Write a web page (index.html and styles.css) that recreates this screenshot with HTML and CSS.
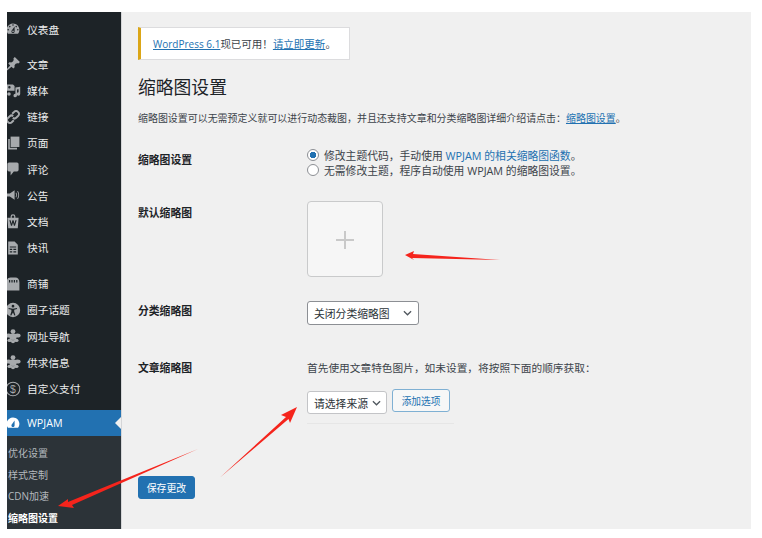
FILE: index.html
```html
<!DOCTYPE html>
<html lang="zh-CN">
<head>
<meta charset="utf-8">
<title>缩略图设置</title>
<link rel="stylesheet" href="styles.css">
</head>
<body>
<div class="admin">
  <nav class="sidebar">
    <ul class="menu">
      <li class="item"><svg class="ico" viewBox="0 0 20 20"><path d="M3.76 16h12.48c1.1-1.37 1.76-3.11 1.76-5 0-4.42-3.58-8-8-8s-8 3.58-8 8c0 1.89.66 3.63 1.76 5zM10 4c.55 0 1 .45 1 1s-.45 1-1 1-1-.45-1-1 .45-1 1-1zM6 6c.55 0 1 .45 1 1s-.45 1-1 1-1-.45-1-1 .45-1 1-1zm8 0c.55 0 1 .45 1 1s-.45 1-1 1-1-.45-1-1 .45-1 1-1zm-5.37 5.55L12 7v6c0 1.1-.9 2-2 2s-2-.9-2-2c0-.57.24-1.08.63-1.45zM4 10c.55 0 1 .45 1 1s-.45 1-1 1-1-.45-1-1 .45-1 1-1zm12 0c.55 0 1 .45 1 1s-.45 1-1 1-1-.45-1-1 .45-1 1-1zm-5 3c0-.55-.45-1-1-1s-1 .45-1 1 .45 1 1 1 1-.45 1-1z"/></svg>仪表盘</li>
    </ul>
    <ul class="menu menu-content">
      <li class="item"><svg class="ico" viewBox="0 0 20 20"><path d="M10.44 3.02l1.82-1.82 6.36 6.35-1.83 1.82c-1.05-.68-2.48-.57-3.41.36l-.75.75c-.92.93-1.04 2.35-.35 3.41l-1.83 1.82-2.41-2.41-2.8 2.79c-.42.42-3.38 2.71-3.8 2.29s1.86-3.39 2.28-3.81l2.79-2.79L4.1 9.36l1.83-1.82c1.05.69 2.48.57 3.4-.36l.75-.75c.93-.92 1.05-2.35.36-3.41z"/></svg>文章</li>
      <li class="item"><svg class="ico" viewBox="0 0 20 20"><path d="M2 3h8l2 2v6H7a3 3 0 0 0-2 0H2zm3.5 2a1.5 1.5 0 1 0 0 3 1.5 1.5 0 0 0 0-3zM13 7l6-1v9a2.2 2.2 0 1 1-2-2.2V9l-2 .4V17a2.2 2.2 0 1 1-2-2.2z"/><circle cx="5" cy="15" r="2.2"/></svg>媒体</li>
      <li class="item"><svg class="ico" viewBox="0 0 20 20"><path class="ico-line" d="M9 6l2.6-2.6a3 3 0 0 1 4.4 0l.6.6a3 3 0 0 1 0 4.4L14 11a3 3 0 0 1-4.2 0M11 14l-2.6 2.6a3 3 0 0 1-4.4 0l-.6-.6a3 3 0 0 1 0-4.4L6 9a3 3 0 0 1 4.2 0"/></svg>链接</li>
      <li class="item"><svg class="ico" viewBox="0 0 20 20"><path d="M7 2h11v13H7z"/><path d="M4 5h2v11h9v2H4z"/></svg>页面</li>
      <li class="item"><svg class="ico" viewBox="0 0 20 20"><path d="M5 2h10c1.1 0 2 .9 2 2v7c0 1.1-.9 2-2 2h-4l-4 5v-5H5c-1.1 0-2-.9-2-2V4c0-1.1.9-2 2-2z"/></svg>评论</li>
      <li class="item"><svg class="ico" viewBox="0 0 20 20"><path d="M2 8h4l6-4v12l-6-4H2zM14 7c1.3 1.6 1.3 4.4 0 6l-.8-.6c1-1.3 1-3.5 0-4.8zM16 5c2.2 2.6 2.2 7.4 0 10l-.8-.6c1.8-2.2 1.8-6.6 0-8.8z"/></svg>公告</li>
      <li class="item"><svg class="ico" viewBox="0 0 20 20"><path fill-rule="evenodd" d="M3 6h4V4.500a3 3 0 0 1 6 0V6h4l-1 13H4zM8.500 6h3V4.500a1.500 1.500 0 0 0-3 0zM5.500 9l2 7h1.300l1.200-4 1.200 4h1.300l2-7h-1.500l-1.100 4.300L10.700 9H9.300l-1.200 4.300L7 9z"/></svg>文档</li>
      <li class="item"><svg class="ico" viewBox="0 0 20 20"><path fill-rule="evenodd" d="M4 2h8l4 4v12H4zM6 8v1.500h8V8zm0 3v1.500h3V11zm4.500 0v1.500H14V11zM6 14v1.500h3V14zm4.500 0v1.500H14V14z"/></svg>快讯</li>
    </ul>
    <ul class="menu menu-extra">
      <li class="item"><svg class="ico" viewBox="0 0 20 20"><path fill-rule="evenodd" d="M2 8c0-4 2-6 5-6h6c3 0 5 2 5 6v10H2zM5 5v3h1.500V5zm3 0v3h1.500V5zm3 0v3h1.500V5zm3 0v3h1.500V5z"/></svg>商铺</li>
      <li class="item"><svg class="ico" viewBox="0 0 20 20"><path fill-rule="evenodd" d="M10 1a9 9 0 1 1 0 18 9 9 0 0 1 0-18zm0 2.500a1.700 1.700 0 1 0 0 3.400 1.700 1.700 0 0 0 0-3.400zM4.500 7.500v1.300l3.500 1V12l-1.500 4.500 1.300.4L10 13l1.700 3.900 1.300-.4-1.500-4.500V9.800l3.500-1V7.500l-5 1z"/></svg>圈子话题</li>
      <li class="item"><svg class="ico" viewBox="0 0 20 20"><circle cx="10" cy="4.500" r="3"/><ellipse cx="4.500" cy="9.500" rx="4" ry="2.500"/><ellipse cx="15.500" cy="9.500" rx="4" ry="2.500"/><ellipse cx="10" cy="11" rx="4.500" ry="4"/><ellipse cx="6" cy="15.500" rx="3" ry="2"/><ellipse cx="14" cy="15.500" rx="3" ry="2"/><ellipse cx="10" cy="17" rx="2.500" ry="2"/></svg>网址导航</li>
      <li class="item"><svg class="ico" viewBox="0 0 20 20"><circle cx="10" cy="4.500" r="3"/><ellipse cx="4.500" cy="9.500" rx="4" ry="2.500"/><ellipse cx="15.500" cy="9.500" rx="4" ry="2.500"/><ellipse cx="10" cy="11" rx="4.500" ry="4"/><ellipse cx="6" cy="15.500" rx="3" ry="2"/><ellipse cx="14" cy="15.500" rx="3" ry="2"/><ellipse cx="10" cy="17" rx="2.500" ry="2"/></svg>供求信息</li>
      <li class="item"><svg class="ico" viewBox="0 0 20 20"><circle class="ico-line ico-thin" cx="10" cy="10" r="8.500"/><text class="ico-glyph" x="10" y="14.500">$</text></svg>自定义支付</li>
    </ul>
    <ul class="menu menu-last">
      <li class="item item-current"><svg class="ico" viewBox="0 0 20 20"><path d="M3.760 16h12.480c1.100-1.370 1.760-3.110 1.760-5 0-4.420-3.580-8-8-8s-8 3.580-8 8c0 1.890.66 3.630 1.760 5zM8.630 11.550L12 7v6c0 1.100-.9 2-2 2s-2-.9-2-2c0-.57.24-1.080.63-1.450z"/></svg>WPJAM</li>
    </ul>
    <ul class="submenu">
      <li class="subitem">优化设置</li>
      <li class="subitem">样式定制</li>
      <li class="subitem">CDN加速</li>
      <li class="subitem subitem-current">缩略图设置</li>
    </ul>
  </nav>
  <main class="content">
    <div class="notice"><a class="link link-wp" href="#">WordPress 6.1</a>现已可用！<a class="link" href="#">请立即更新</a>。</div>
    <h1 class="title">缩略图设置</h1>
    <p class="desc">缩略图设置可以无需预定义就可以进行动态裁图，并且还支持文章和分类缩略图详细介绍请点击：<a class="link" href="#">缩略图设置</a>。</p>
    <form class="form">
      <div class="row row-radio">
        <div class="label">缩略图设置</div>
        <div class="field radios">
          <label class="radio"><input class="radio-input" type="radio" name="t" checked><span>修改主题代码，手动使用 <a class="link-plain" href="#">WPJAM 的相关缩略图函数</a>。</span></label>
          <label class="radio"><input class="radio-input" type="radio" name="t"><span>无需修改主题，程序自动使用 WPJAM 的缩略图设置。</span></label>
        </div>
      </div>
      <div class="row row-thumb">
        <div class="label">默认缩略图</div>
        <div class="field">
          <div class="thumb"><span class="thumb-h"></span><span class="thumb-v"></span></div>
        </div>
      </div>
      <div class="row row-cat">
        <div class="label">分类缩略图</div>
        <div class="field">
          <div class="select select-cat">关闭分类缩略图<svg class="chev" viewBox="0 0 10 6"><path d="M1 1l4 4 4-4"/></svg></div>
        </div>
      </div>
      <div class="row row-post">
        <div class="label">文章缩略图</div>
        <div class="field">
          <p class="post-text">首先使用文章特色图片，如未设置，将按照下面的顺序获取：</p>
          <div class="source">
            <div class="select select-src">请选择来源<svg class="chev" viewBox="0 0 10 6"><path d="M1 1l4 4 4-4"/></svg></div>
            <button class="btn-add" type="button">添加选项</button>
          </div>
          <div class="rule"></div>
        </div>
      </div>
      <button class="btn-save" type="button">保存更改</button>
    </form>
  </main>
</div>
<svg class="arrows" viewBox="0 0 762 538">
  <polygon points="405,255 414,251 413,254 500,260 412,258 414,260"/>
  <polygon points="297,407 290,423 288.500,419 220,477.500 286,417 281,415"/>
  <polygon points="58,506 68,499 68,502 198,449 72,505 74,508"/>
</svg>
</body>
</html>
```
FILE: styles.css
```css
* { box-sizing: border-box; }
html, body { margin: 0; padding: 0; background: #fff; }
body {
  width: 762px;
  height: 538px;
  padding: 12px 11px 9px 7px;
  overflow: hidden;
  font-family: "Open Sans", "Noto Sans CJK SC", sans-serif;
  font-size: 10px;
  color: #3c434a;
}
ul { list-style: none; margin: 0; padding: 0; }
p { margin: 0; }

.admin { display: flex; height: 517px; background: #f0f0f0; }

.sidebar {
  flex: 0 0 115px;
  display: flex;
  flex-direction: column;
  padding-top: 4px;
  background: #1d2327;
  border-right: 1px solid #d5d6d8;
  overflow: hidden;
  color: #eceded;
}
.menu { margin-bottom: 9px; }
.menu-content { margin-bottom: 10px; }
.menu-extra { margin-bottom: 8px; }
.menu-last { margin-bottom: 0; }
.item {
  display: flex;
  align-items: center;
  gap: 6px;
  height: 26.2px;
  margin-left: -2px;
  font-size: 10.7px;
  position: relative;
}
.ico { flex: 0 0 16px; width: 16px; height: 16px; fill: #a7aaad; }
.ico-line { fill: none; stroke: #a7aaad; stroke-width: 2.4; }
.ico-thin { stroke-width: 1.3; }
.ico-glyph { fill: #a7aaad; font-size: 13px; text-anchor: middle; font-family: "Liberation Sans", sans-serif; }
.item-current { background: #2271b1; color: #fff; }
.item-current .ico { fill: #fff; }
.item-current::after {
  content: "";
  position: absolute;
  right: 0;
  top: 7px;
  border: 6px solid transparent;
  border-left-width: 0;
  border-right-color: #f0f0f0;
}
.submenu { flex: 1; padding-top: 7px; background: #2c3338; color: #b4b9be; }
.subitem { height: 21.7px; line-height: 21.7px; padding-left: 1px; font-size: 10px; }
.subitem-current { color: #fff; font-weight: 700; }

.content { flex: 1; padding: 15px 0 0 16px; min-width: 0; }
.notice {
  width: 212px;
  height: 33px;
  padding-left: 12px;
  line-height: 32px;
  font-size: 10.5px;
  background: #fff;
  border: 1px solid #dcdcde;
  border-left: 3px solid #dba617;
}
.link { color: #2271b1; text-decoration: underline; }
.link-wp { font-size: 10px; }
.link-plain { color: #2271b1; text-decoration: none; }
.title { margin: 15px 0 0; font-size: 17.8px; font-weight: 400; line-height: 24px; color: #1d2327; }
.desc { margin-top: 12px; line-height: 14px; font-size: 9.96px; white-space: nowrap; }

.form { margin: 0; }
.row { display: grid; grid-template-columns: 169px 1fr; }
.label { font-size: 10.8px; font-weight: 700; line-height: 16px; color: #1d2327; }
.row-radio { margin-top: 22px; }
.row-radio .label { padding-top: 5px; }
.radios { display: flex; flex-direction: column; }
.radio { display: flex; align-items: center; height: 15.5px; font-size: 10.8px; white-space: nowrap; }
.radio-input {
  appearance: none;
  width: 12px;
  height: 12px;
  margin: 0 5px 0 0;
  border: 1px solid #8c8f94;
  border-radius: 50%;
  background: #fff;
}
.radio-input:checked { background: radial-gradient(circle, #2271b1 0 3px, #fff 3.5px); }
.row-thumb { margin-top: 23px; }
.row-thumb .label { padding-top: 4px; }
.thumb {
  position: relative;
  width: 76px;
  height: 76px;
  border: 1px solid #c9cacb;
  border-radius: 4px;
  background: #f6f6f6;
}
.thumb-h, .thumb-v { position: absolute; background: #c9c9c9; }
.thumb-h { left: 28px; top: 37px; width: 18px; height: 2px; }
.thumb-v { left: 36px; top: 29px; width: 2px; height: 18px; }
.row-cat { margin-top: 24px; }
.row-cat .label { padding-top: 2px; }
.select {
  display: flex;
  align-items: center;
  justify-content: space-between;
  height: 24px;
  padding: 0 6px;
  font-size: 10.8px;
  color: #2c3338;
  background: #fff;
  border: 1px solid #8c8f94;
  border-radius: 3px;
  white-space: nowrap;
}
.select-cat { width: 112px; }
.select-src { width: 80px; height: 23px; margin-top: 2px; padding-right: 5px; border-color: #c3c4c7; }
.chev { width: 9px; height: 6px; fill: none; stroke: #50575e; stroke-width: 1.4; }
.row-post { margin-top: 35px; }
.post-text { line-height: 16px; font-size: 10.7px; white-space: nowrap; }
.source { display: flex; align-items: flex-start; gap: 5px; margin-top: 13px; }
.btn-add {
  width: 58px;
  height: 23px;
  padding: 0;
  font: inherit;
  font-size: 9.7px;
  color: #2271b1;
  background: #f6f7f7;
  border: 1px solid #7fb0d3;
  border-radius: 3px;
}
.rule { width: 147px; margin-top: 9px; border-top: 1px solid #e6e6e6; }
.btn-save {
  display: block;
  width: 57px;
  height: 23px;
  margin-top: 52px;
  padding: 0;
  font: inherit;
  font-size: 9.9px;
  color: #fff;
  background: #2271b1;
  border: 1px solid #2271b1;
  border-radius: 3px;
}

.arrows { position: absolute; left: 0; top: 0; width: 762px; height: 538px; fill: #f5241c; pointer-events: none; }
```
